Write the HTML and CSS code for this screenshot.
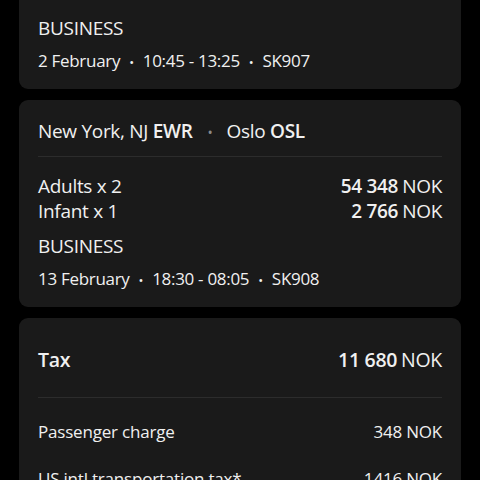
FILE: index.html
```html
<!DOCTYPE html>
<html lang="en">
<head>
<meta charset="utf-8">
<link rel="stylesheet" href="styles.css">
</head>
<body>
<main class="page">
  <section class="card card-cut">
    <div class="cabin">BUSINESS</div>
    <div class="when">2 February<span class="dot">•</span>10:45 - 13:25<span class="dot">•</span>SK907</div>
  </section>

  <section class="card">
    <div class="route">New York, NJ <b>EWR</b><span class="sep">•</span>Oslo <b>OSL</b></div>
    <div class="divider"></div>
    <div class="fares">
      <div class="fare"><span>Adults x 2</span><span class="amount"><b>54 348</b>NOK</span></div>
      <div class="fare"><span>Infant x 1</span><span class="amount"><b>2 766</b>NOK</span></div>
    </div>
    <div class="cabin">BUSINESS</div>
    <div class="when">13 February<span class="dot">•</span>18:30 - 08:05<span class="dot">•</span>SK908</div>
  </section>

  <section class="card tax-card">
    <div class="tax-head"><span>Tax</span><span class="amount"><b>11 680</b>NOK</span></div>
    <div class="divider tax-divider"></div>
    <div class="tax-rows">
      <div class="tax-row"><span>Passenger charge</span><span>348 NOK</span></div>
      <div class="tax-row"><span>US intl transportation tax*</span><span>1416 NOK</span></div>
      <div class="tax-row"><span>US customs user fee</span><span>140 NOK</span></div>
    </div>
  </section>
</main>
</body>
</html>
```

FILE: styles.css
```css
html, body {
  margin: 0;
  padding: 0;
  background: #000;
}

body {
  font-family: "Open Sans", "Noto Sans", sans-serif;
  color: #f0f0f0;
  width: 480px;
  height: 480px;
  overflow: hidden;
}

.page {
  display: flex;
  flex-direction: column;
  gap: 11px;
  padding: 0 19px;
}

.card {
  background: #1a1a1a;
  border-radius: 9px;
  padding: 19px 19px 16px;
}

.card-cut {
  border-top-left-radius: 0;
  border-top-right-radius: 0;
  padding-top: 16px;
}

.card-cut .cabin {
  margin-top: 0;
}

.route {
  font-size: 19px;
  line-height: 24px;
  letter-spacing: -0.3px;
}

.route b {
  font-weight: 600;
}

.sep {
  color: #8a8a8a;
  margin: 0 14px 0 15px;
  font-size: 14px;
  line-height: 1;
}

.divider {
  height: 1px;
  background: #2c2c2c;
  margin: 13px 0 17px;
}

.fares {
  display: flex;
  flex-direction: column;
}

.fare {
  display: flex;
  justify-content: space-between;
  font-size: 19px;
  line-height: 25px;
  letter-spacing: -0.3px;
}

.amount b {
  font-weight: 600;
  margin-right: 4px;
}

.cabin {
  font-size: 19px;
  line-height: 24px;
  margin-top: 10px;
  letter-spacing: -0.3px;
}

.when {
  font-size: 17px;
  line-height: 24px;
  margin-top: 9px;
  letter-spacing: -0.3px;
}

.dot {
  margin: 0 9px;
  font-size: 13px;
  line-height: 1;
}

.tax-card {
  padding-top: 28px;
}

.tax-head {
  display: flex;
  justify-content: space-between;
  font-size: 19.5px;
  line-height: 28px;
  letter-spacing: -0.3px;
}

.tax-head > span:first-child {
  font-weight: 600;
}

.tax-divider {
  margin: 23px 0 22px;
}

.tax-rows {
  display: flex;
  flex-direction: column;
  gap: 23px;
}

.tax-row {
  display: flex;
  justify-content: space-between;
  font-size: 17px;
  line-height: 24px;
  letter-spacing: -0.2px;
}
```
